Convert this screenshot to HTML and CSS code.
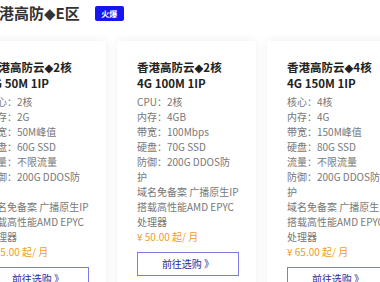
FILE: index.html
```html
<!DOCTYPE html>
<html lang="zh-CN">
<head>
    <meta charset="UTF-8">
    <meta name="viewport" content="width=device-width, initial-scale=1.0">
    <title>香港高防◆E区</title>
    <link rel="stylesheet" href="styles.css">
</head>
<body>
    <div class="zone">
        <div class="zone-head">
            <h2 class="zone-title">香港高防<span class="dia">◆</span>E区</h2>
            <span class="badge">火爆</span>
        </div>

        <div class="plans">
            <div class="plan">
                <h3 class="plan-name">香港高防云<span class="dia">◆</span>2核<br>4G 50M 1IP</h3>
                <ul class="specs">
                    <li>核心：2核</li>
                    <li>内存：2G</li>
                    <li>带宽：50M峰值</li>
                    <li>硬盘：60G SSD</li>
                    <li>流量：不限流量</li>
                    <li>防御：200G DDOS防护</li>
                </ul>
                <p class="extra">域名免备案 广播原生IP</p>
                <p class="extra">搭载高性能AMD EPYC处理器</p>
                <p class="price">¥ 65.00 起/ 月</p>
                <a class="buy" href="#">前往选购 》</a>
            </div>

            <div class="plan">
                <h3 class="plan-name">香港高防云<span class="dia">◆</span>2核<br>4G 100M 1IP</h3>
                <ul class="specs">
                    <li>CPU：2核</li>
                    <li>内存：4GB</li>
                    <li>带宽：100Mbps</li>
                    <li>硬盘：70G SSD</li>
                    <li>防御：200G DDOS防护</li>
                </ul>
                <p class="extra">域名免备案 广播原生IP</p>
                <p class="extra">搭载高性能AMD EPYC处理器</p>
                <p class="price">¥ 50.00 起/ 月</p>
                <a class="buy" href="#">前往选购 》</a>
            </div>

            <div class="plan">
                <h3 class="plan-name">香港高防云<span class="dia">◆</span>4核<br>4G 150M 1IP</h3>
                <ul class="specs">
                    <li>核心：4核</li>
                    <li>内存：4G</li>
                    <li>带宽：150M峰值</li>
                    <li>硬盘：80G SSD</li>
                    <li>流量：不限流量</li>
                    <li>防御：200G DDOS防护</li>
                </ul>
                <p class="extra">域名免备案 广播原生IP</p>
                <p class="extra">搭载高性能AMD EPYC处理器</p>
                <p class="price">¥ 65.00 起/ 月</p>
                <a class="buy" href="#">前往选购 》</a>
            </div>
        </div>
    </div>
</body>
</html>
```

FILE: styles.css
```css
body {
    margin: 0;
    padding: 0;
    background-color: #ffffff;
    font-family: "Noto Sans CJK SC", "Noto Sans", sans-serif;
    overflow: hidden;
}

.zone {
    margin-left: -33px;
}

.zone-head {
    display: flex;
    align-items: center;
    height: 26px;
    padding-left: 17px;
}

.zone-title {
    margin: 0;
    font-size: 15px;
    font-weight: bold;
    color: #333333;
    line-height: 26px;
}

.dia {
    font-family: "DejaVu Sans", sans-serif;
    line-height: 0;
}

.badge {
    margin-left: 15px;
    background-color: #1616ee;
    color: #ffffff;
    font-size: 8px;
    font-weight: bold;
    line-height: 15px;
    width: 29px;
    text-align: center;
    border-radius: 2px;
}

.plans {
    display: flex;
    gap: 11px;
    margin-top: 15px;
    align-items: flex-start;
}

.plan {
    width: 102px;
    flex-shrink: 0;
    background-color: #ffffff;
    padding: 18px 17px 30px 20px;
    box-shadow: 0 0 9px rgba(0, 0, 0, 0.07);
}

.plan-name {
    margin: 0 0 3px;
    font-size: 11.5px;
    line-height: 16px;
    font-weight: bold;
    color: #222222;
}

.specs {
    list-style: none;
    margin: 0;
    padding: 0;
}

.specs li,
.extra,
.price {
    font-size: 10px;
    line-height: 15px;
    color: #777777;
    margin: 0;
}

.price {
    color: #f39a2b;
}

.buy {
    display: block;
    margin-top: 8px;
    height: 22px;
    line-height: 22px;
    border: 1px solid #7c7ce8;
    text-align: center;
    font-size: 10px;
    color: #2c2c9c;
    text-decoration: none;
}
```
